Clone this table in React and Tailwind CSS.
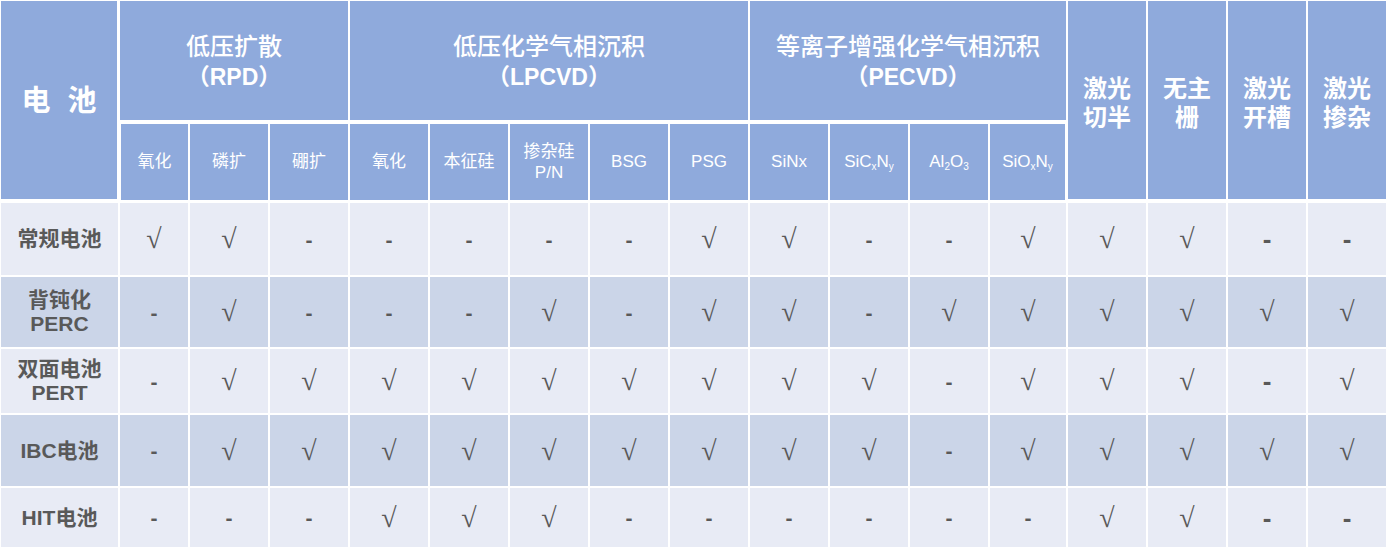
import React from "react";

const F = "font-['Liberation_Sans','Noto_Sans_CJK_SC',sans-serif]";
const HEAD = "bg-[#8FAADC] text-white flex items-center justify-center text-center";

const rows = [
  { label: ["常规电池"], v: "YYNNNNNYYNNYYYNN" },
  { label: ["背钝化", "PERC"], v: "NYNNNYNYYNYYYYYY" },
  { label: ["双面电池", "PERT"], v: "NYYYYYYYYYNYYYNY" },
  { label: ["IBC电池"], v: "NYYYYYYYYYNYYYYY" },
  { label: ["HIT电池"], v: "NNNYYYNNNNNNYYNN" },
];

const subs = [
  "氧化",
  "磷扩",
  "硼扩",
  "氧化",
  "本征硅",
  "掺杂硅|P/N",
  "BSG",
  "PSG",
  "SiNx",
  "SiCN",
  "AlO",
  "SiON",
];

function SubLabel({ s }) {
  if (s === "SiCN")
    return (
      <span>
        SiC<sub className="text-[10px]">x</sub>N<sub className="text-[10px]">y</sub>
      </span>
    );
  if (s === "AlO")
    return (
      <span>
        Al<sub className="text-[10px]">2</sub>O<sub className="text-[10px]">3</sub>
      </span>
    );
  if (s === "SiON")
    return (
      <span>
        SiO<sub className="text-[10px]">x</sub>N<sub className="text-[10px]">y</sub>
      </span>
    );
  if (s.includes("|")) {
    const [a, b] = s.split("|");
    return (
      <span className="leading-[21px]">
        {a}
        <br />
        {b}
      </span>
    );
  }
  return <span>{s}</span>;
}

export default function App() {
  return (
    <div className={`${F} bg-white w-[1390px] h-[551px]`}>
      <div className="grid w-fit grid-cols-[117px_68px_repeat(10,78px)_76px_repeat(4,78px)] grid-rows-[119px_79px_72px_70px_64px_71px_59px] gap-[2px] p-px bg-white">
        {/* header row 1 */}
        <div className={`${HEAD} row-span-2 mb-[2px] mr-px text-[29px] font-bold gap-[17px] pt-[4px]`}>
          <span>电</span>
          <span>池</span>
        </div>
        <div className={`${HEAD} col-span-3 flex-col text-[24px] leading-[31px] pt-[3px]`}>
          <span className="font-medium">低压扩散</span>
          <span className="font-bold text-[23px]">（RPD）</span>
        </div>
        <div className={`${HEAD} col-span-5 flex-col text-[24px] leading-[31px] pt-[3px]`}>
          <span className="font-medium">低压化学气相沉积</span>
          <span className="font-bold text-[23px]">（LPCVD）</span>
        </div>
        <div className={`${HEAD} col-span-4 flex-col text-[24px] leading-[31px] pt-[3px]`}>
          <span className="font-medium">等离子增强化学气相沉积</span>
          <span className="font-bold text-[23px]">（PECVD）</span>
        </div>
        {[
          ["激光", "切半"],
          ["无主", "栅"],
          ["激光", "开槽"],
          ["激光", "掺杂"],
        ].map((t, i) => (
          <div
            key={i}
            className={`${HEAD} row-span-2 mb-[2px] flex-col text-[24px] font-bold leading-[29px] pt-[6px]`}
          >
            <span>{t[0]}</span>
            <span>{t[1]}</span>
          </div>
        ))}
        {/* header row 2 */}
        {subs.map((s, i) => (
          <div
            key={i}
            className={`${HEAD} mt-[2px] mb-px text-[17px] ${i === 0 ? "ml-px" : ""} ${
              i === subs.length - 1 ? "mr-px" : ""
            }`}
          >
            <SubLabel s={s} />
          </div>
        ))}
        {/* body */}
        {rows.map((r, ri) => {
          const bg = ri % 2 === 0 ? "bg-[#E8EBF5]" : "bg-[#CBD5E8]";
          return (
            <React.Fragment key={ri}>
              <div
                className={`${bg} flex flex-col items-center justify-center text-center text-[21px] font-bold text-[#595959] leading-[24px]`}
              >
                {r.label.map((l, k) => (
                  <span key={k}>{l}</span>
                ))}
              </div>
              {r.v.split("").map((c, ci) => (
                <div key={ci} className={`${bg} flex items-center justify-center text-[#595959]`}>
                  {c === "Y" ? (
                    <span className="font-['Liberation_Serif',serif] text-[28px] leading-none">√</span>
                  ) : ci >= 12 ? (
                    <span className="font-['Liberation_Sans',sans-serif] text-[26px] font-black leading-none">-</span>
                  ) : (
                    <span className="font-['Liberation_Sans',sans-serif] text-[21px] font-bold leading-none">-</span>
                  )}
                </div>
              ))}
            </React.Fragment>
          );
        })}
      </div>
    </div>
  );
}
